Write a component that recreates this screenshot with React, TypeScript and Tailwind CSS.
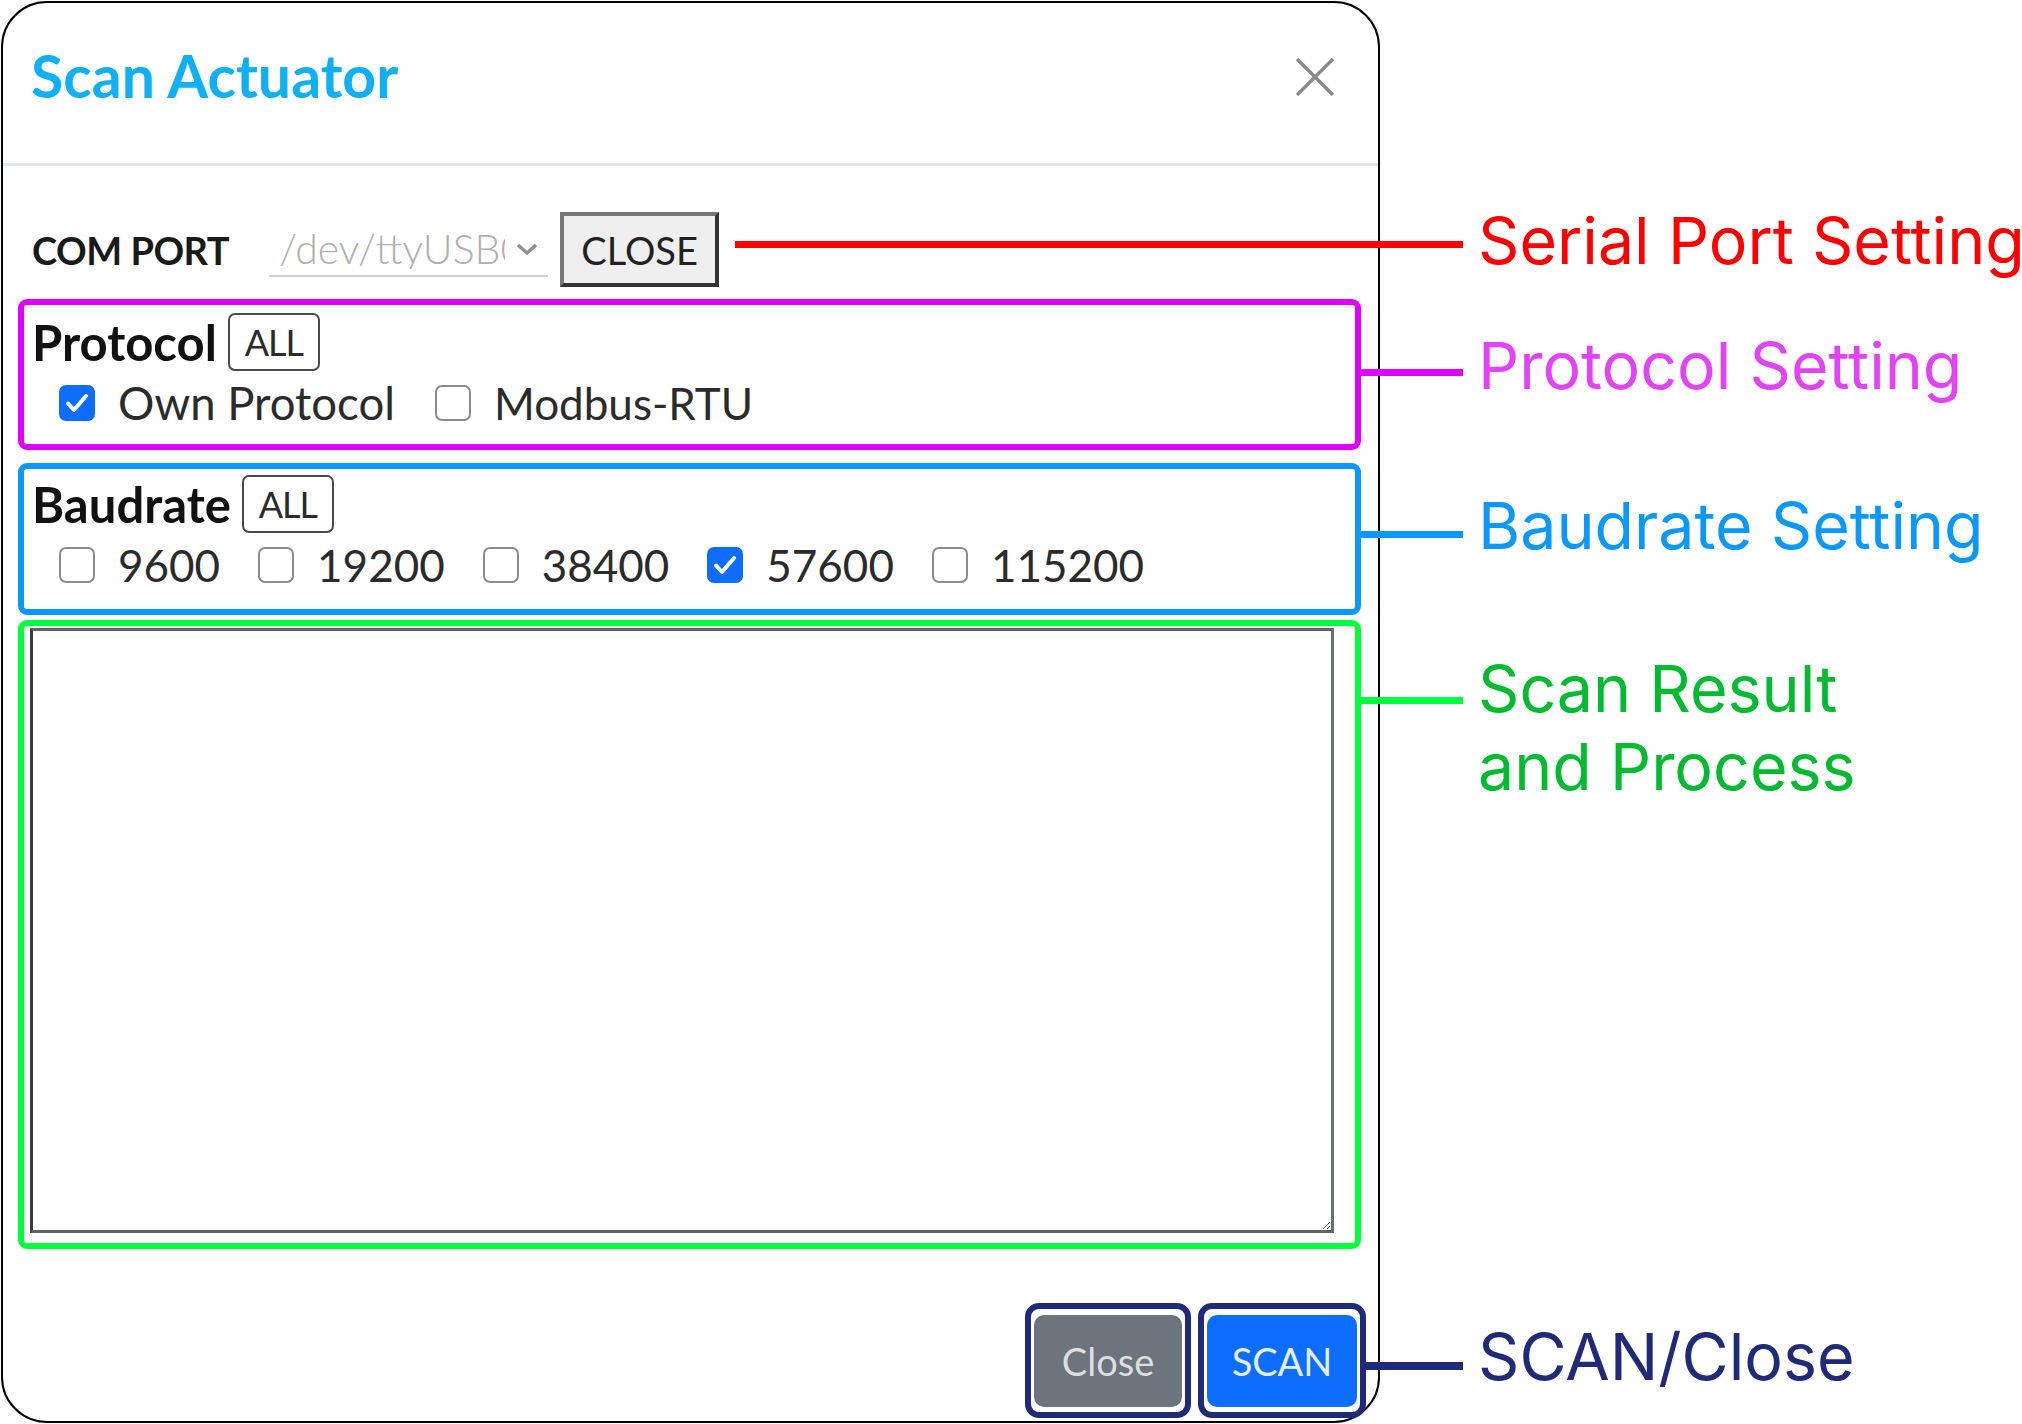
import React from "react";

const UI = "font-['Lato','Liberation_Sans',sans-serif]";
const ANN = "font-['Inter','Liberation_Sans',sans-serif]";

function Box({ checked }: { checked?: boolean }) {
  if (checked) {
    return (
      <span className="flex h-[36px] w-[36px] shrink-0 items-center justify-center rounded-[7px] bg-[#0d6efd]">
        <svg width="30" height="30" viewBox="0 0 30 30" fill="none">
          <path d="M6 15.5l6 6.5L24 8" stroke="#fff" strokeWidth="4" strokeLinecap="round" strokeLinejoin="round" />
        </svg>
      </span>
    );
  }
  return <span className="block h-[36px] w-[36px] shrink-0 rounded-[7px] border-[2.5px] border-[#8c8c8c] bg-white" />;
}

function Opt({ label, checked, size }: { label: string; checked?: boolean; size: string }) {
  return (
    <div className="flex items-center gap-[23px]">
      <Box checked={checked} />
      <span className={`${size} leading-none text-[#2b2b2b]`}>{label}</span>
    </div>
  );
}

function AllBtn() {
  return (
    <span className="flex h-[58px] w-[92px] items-center justify-center rounded-[7px] border-[2.5px] border-[#4a4a4a] text-[36px] leading-none tracking-[-1px] text-[#2b2b2b]">
      ALL
    </span>
  );
}

export default function App() {
  return (
    <div className={`relative h-[1424px] w-[2022px] overflow-hidden bg-white ${UI}`}>
      {/* Dialog */}
      <div className="ml-[1px] mt-[1px] flex h-[1422px] w-[1379px] flex-col rounded-[46px] border-2 border-black bg-white">
        {/* Header */}
        <div className="flex h-[163px] shrink-0 items-start justify-between border-b-[3px] border-[#e3e6ea] pl-[28px] pr-[43px]">
          <h1 className="mt-[43px] text-[59px] font-bold leading-none text-[#10b1f4]">Scan Actuator</h1>
          <svg className="mt-[54px]" width="40" height="40" viewBox="0 0 40 40" fill="none">
            <path d="M2 2L38 38M38 2L2 38" stroke="#8a8a8a" strokeWidth="3.5" />
          </svg>
        </div>

        {/* Body */}
        <div className="flex flex-col pl-[15px] pr-[17px]">
          {/* COM PORT row */}
          <div className="mt-[46px] flex h-[75px] items-center">
            <span className="ml-[14px] text-[38px] font-bold leading-none tracking-[-0.5px] text-[#1a1a1a]">COM PORT</span>
            <div className="ml-[40px] flex h-[54px] w-[279px] items-center border-b-2 border-[#d2d2d2] pl-[10px] pr-[8px]">
              <span className="w-[226px] overflow-hidden whitespace-nowrap text-[41px] font-light leading-none text-[#b0b0b0]">/dev/ttyUSB0</span>
              <svg className="ml-auto" width="26" height="16" viewBox="0 0 26 16" fill="none">
                <path d="M4 4l9 8 9-8" stroke="#8f8f8f" strokeWidth="3.5" />
              </svg>
            </div>
            <button className="ml-[12px] flex h-[75px] w-[159px] items-center justify-center border-[4px] border-t-[#777] border-l-[#777] border-r-[#333] border-b-[#333] bg-[#efefef] text-[38px] leading-none text-[#222]">
              CLOSE
            </button>
          </div>

          {/* Protocol */}
          <div className="mt-[12px] flex h-[151px] flex-col rounded-[9px] border-[6px] border-[#dd00ff] pl-[8px] pt-[8px]">
            <div className="flex h-[58px] items-center gap-[11px]">
              <span className="text-[49px] font-bold leading-none text-[#111]">Protocol</span>
              <AllBtn />
            </div>
            <div className="ml-[27px] mt-[14px] flex h-[36px] items-center gap-[40px]">
              <Opt label="Own Protocol" checked size="text-[45.5px]" />
              <Opt label="Modbus-RTU" size="text-[44px]" />
            </div>
          </div>

          {/* Baudrate */}
          <div className="mt-[13px] flex h-[152px] flex-col rounded-[9px] border-[6px] border-[#0a98fa] pl-[8px] pt-[6px]">
            <div className="flex h-[58px] items-center gap-[11px]">
              <span className="text-[49px] font-bold leading-none text-[#111]">Baudrate</span>
              <AllBtn />
            </div>
            <div className="ml-[27px] mt-[14px] flex h-[36px] items-center gap-[38px]">
              <Opt label="9600" size="text-[44px]" />
              <Opt label="19200" size="text-[44px]" />
              <Opt label="38400" size="text-[44px]" />
              <Opt label="57600" checked size="text-[44px]" />
              <Opt label="115200" size="text-[44px]" />
            </div>
          </div>

          {/* Scan result */}
          <div className="mt-[5px] flex h-[629px] flex-col rounded-[9px] border-[6px] border-[#00ff3c]">
            <textarea
              readOnly
              className="ml-[6px] mt-[2px] h-[605px] w-[1304px] resize-y border-[3px] border-t-[#5f6368] border-l-[#3a3d40] border-r-[#6b6f73] border-b-[#5f6368] bg-white outline-none"
            />
          </div>
        </div>

        {/* Footer */}
        <div className="flex flex-1 items-end justify-end gap-[7px] pb-[3px] pr-[12px]">
          <div className="rounded-[14px] border-[6px] border-[#1f2a78] px-[3px] pb-[5px] pt-[6px]">
            <button className="flex h-[92px] w-[148px] items-center justify-center rounded-[10px] bg-[#6c757d] text-[38px] leading-none text-[#dedede]">
              Close
            </button>
          </div>
          <div className="rounded-[14px] border-[6px] border-[#1f2a78] px-[3px] pb-[5px] pt-[6px]">
            <button className="flex h-[92px] w-[150px] items-center justify-center rounded-[10px] bg-[#0d6efd] text-[38px] leading-none text-[#e6efff]">
              SCAN
            </button>
          </div>
        </div>
      </div>

      {/* Annotation callouts */}
      <div className={`${ANN}`}>
        <div className="absolute left-[735px] top-[241px] h-[7px] w-[728px] bg-[#ff0000]" />
        <div className="absolute left-[1478px] top-[209px] whitespace-nowrap text-[64.5px] leading-none text-[#ff0000]">Serial Port Setting</div>

        <div className="absolute left-[1361px] top-[369px] h-[7px] w-[102px] bg-[#dd00ff]" />
        <div className="absolute left-[1478px] top-[334px] whitespace-nowrap text-[64.5px] leading-none text-[#e243f7]">Protocol Setting</div>

        <div className="absolute left-[1361px] top-[531px] h-[7px] w-[102px] bg-[#0a98fa]" />
        <div className="absolute left-[1478px] top-[494px] whitespace-nowrap text-[64.5px] leading-none text-[#0a98fa]">Baudrate Setting</div>

        <div className="absolute left-[1361px] top-[697px] h-[7px] w-[102px] bg-[#00ff3c]" />
        <div className="absolute left-[1478px] top-[650px] whitespace-nowrap text-[64.5px] leading-[78px] text-[#00bb30]">
          Scan Result
          <br />
          and Process
        </div>

        <div className="absolute left-[1363px] top-[1362px] h-[8px] w-[100px] bg-[#1f2a78]" />
        <div className="absolute left-[1478px] top-[1325px] whitespace-nowrap text-[64.5px] leading-none text-[#1f2a78]">SCAN/Close</div>
      </div>
    </div>
  );
}
